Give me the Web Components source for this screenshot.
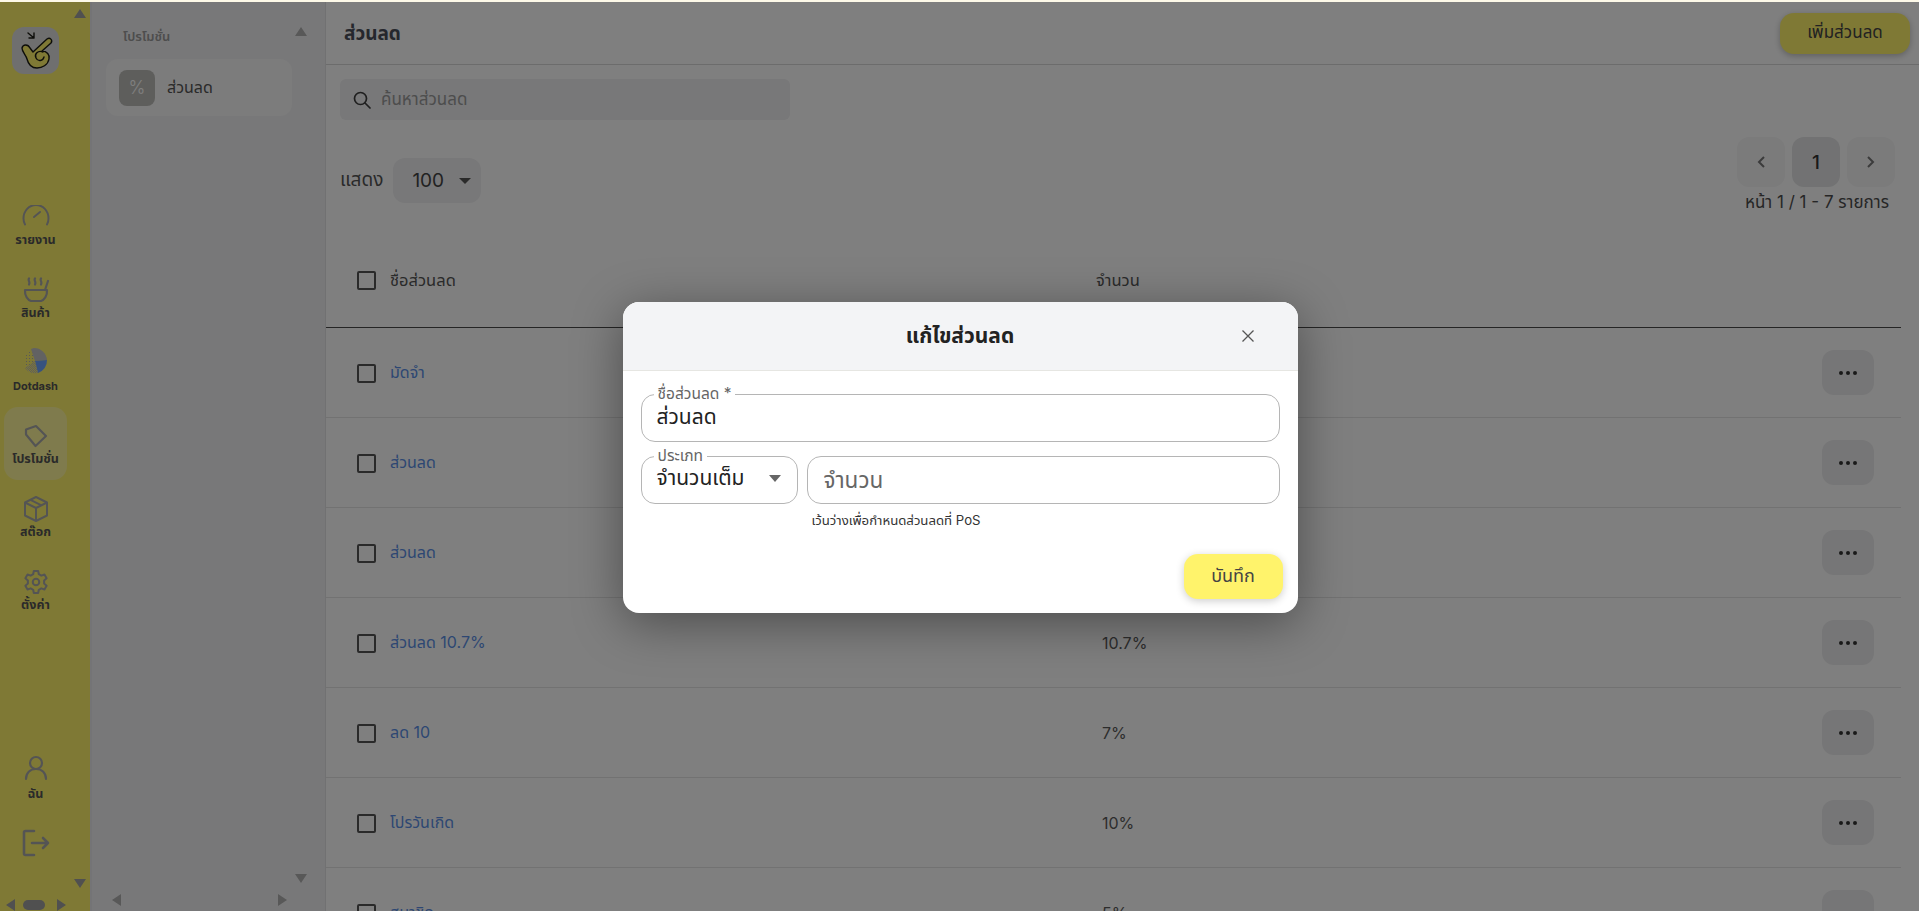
<!DOCTYPE html>
<html lang="th">
<head>
<meta charset="utf-8">
<title>ส่วนลด</title>
<style>
  html, body { margin: 0; height: 100%; overflow: hidden; background: #fff; }
  body { font-family: Inter, "Noto Sans Thai", "Noto Sans", "Open Sans", sans-serif; color: #3a3f4a; }
</style>
</head>
<body>
<app-shell>
  <app-rail slot="rail"></app-rail>
  <promo-panel slot="panel"></promo-panel>
  <discount-page slot="main"></discount-page>
  <edit-dialog slot="dialog"></edit-dialog>
</app-shell>

<script>
const ICONS = {
  gauge: `<svg width="28" height="24" viewBox="0 2 28 24" fill="none" stroke="#a9a9a9" stroke-width="2" stroke-linecap="round"><path d="M3 21.500C1.800 19.500 1.500 17.500 1.500 15.500 1.500 8 7 2 14 2s12.500 6 12.500 13.500c0 2-.3 4-1.500 6"/><path d="M12 14l6-5"/></svg>`,
  bowl: `<svg width="28" height="26" viewBox="0 0 28 26" fill="none" stroke="#a9a9a9" stroke-width="2.200" stroke-linecap="round" stroke-linejoin="round"><path d="M7 1.500c-1.500 2 1.500 3 0 6M13 1.500c-1.500 2 1.500 3 0 6M19 1.500c-1.500 2 1.500 3 0 6M26 4l-3 9"/><path d="M3 13h22c.5 6-3 10-6 11H9c-3-1-6.500-5-6-11z"/></svg>`,
  dotdash: `<svg width="26" height="30" viewBox="0 2 26 30"><defs><pattern id="d" width="2" height="2" patternUnits="userSpaceOnUse"><rect width="1" height="1" fill="#bdbdbd"/><rect x="1" y="1" width="1" height="1" fill="#bdbdbd"/></pattern><pattern id="s" width="3" height="3" patternUnits="userSpaceOnUse"><rect width="1" height="1" fill="#b0b0b0"/></pattern></defs><path d="M11 2a13 13 0 0 1 13 12l-12 1L8 3z" fill="#c4c4c4"/><path d="M24 14a13 13 0 0 1-9 13L12 15z" fill="#6fa4ff"/><path d="M15 27A13 13 0 0 1 2 22l10-7z" fill="url(#d)"/><path d="M2 22l10-7L8 3C5 5 3 8 2 10z" fill="url(#s)"/></svg>`,
  tag: `<svg width="26" height="26" viewBox="0 0 26 26" fill="none" stroke="#a9a9a9" stroke-width="2.200" stroke-linejoin="round"><path d="M3 6.500 13 3l10 10-10.500 10L3 11.500z"/></svg>`,
  box: `<svg width="26" height="28" viewBox="0 0 26 28" fill="none" stroke="#a9a9a9" stroke-width="2" stroke-linejoin="round"><path d="M13 2l11 5.500v13L13 26 2 20.500v-13z"/><path d="M2 7.500 13 13l11-5.500M13 13v13M7.500 4.800l11 5.500"/></svg>`,
  gear: `<svg width="26" height="26" viewBox="0 0 24 24" fill="none" stroke="#a9a9a9" stroke-width="1.900" stroke-linejoin="round"><circle cx="12" cy="12" r="3"/><path d="M10 1.800h4l.6 3 2.300 1.300 2.900-1 2 3.500-2.300 2v2.800l2.300 2-2 3.500-2.900-1-2.300 1.300-.6 3h-4l-.6-3-2.300-1.300-2.900 1-2-3.500 2.300-2v-2.800l-2.300-2 2-3.500 2.900 1 2.300-1.300z"/></svg>`,
  user: `<svg width="24" height="26" viewBox="0 0 24 26" fill="none" stroke="#a9a9a9" stroke-width="2.200" stroke-linecap="round"><circle cx="12" cy="8" r="6"/><path d="M2 24c0-6 4-10 10-10s10 4 10 10"/></svg>`,
  logout: `<svg width="28" height="28" viewBox="0 0 28 28" fill="none" stroke="#a9a9a9" stroke-width="2.600" stroke-linecap="round" stroke-linejoin="round"><path d="M12 2H3.500A1.500 1.500 0 0 0 2 3.500v21A1.500 1.500 0 0 0 3.500 26H12"/><path d="M10 14h16M21 9l5 5-5 5"/></svg>`,
  search: `<svg width="18" height="18" viewBox="0 0 18 18" fill="none" stroke="#3f3f3f" stroke-width="1.700" stroke-linecap="round"><circle cx="7.500" cy="7.500" r="6"/><path d="M12 12l5 5"/></svg>`,
  hand: `<svg width="47" height="47" viewBox="0 0 47 47" stroke="#1c1c14" stroke-width="1.400" stroke-linejoin="round" stroke-linecap="round"><path d="M16 6l6 5M22 6v5h-5" fill="none"/><path d="M10 21c1-4 6-4 8 0l3 4L35 12c3-2 6 1 4 4l-9 8c5 0 8 4 7 8-1 6-7 9-12 9-6 0-9-5-10-9-1-4-5-7-5-11z" fill="#fff36b"/><path d="M31 25c-5-2-9 2-7 6 2 4 7 3 8-1" fill="none"/></svg>`
};

class BaseEl extends HTMLElement {
  constructor() {
    super();
    this.attachShadow({ mode: "open" });
  }
}

class AppShell extends BaseEl {
  connectedCallback() {
    this.shadowRoot.innerHTML = `
      <style>
        :host { display: block; height: 100vh; overflow: hidden; position: relative; }
        .strip { height: 2px; background: #fdf9e8; }
        .layout { display: flex; height: calc(100vh - 2px); }
        ::slotted([slot="main"]) { flex: 1; min-width: 0; }
      </style>
      <div class="strip"></div>
      <div class="layout">
        <slot name="rail"></slot>
        <slot name="panel"></slot>
        <slot name="main"></slot>
      </div>
      <slot name="dialog"></slot>
    `;
  }
}

class ScrollArrow extends BaseEl {
  connectedCallback() {
    const dir = this.getAttribute("dir-to");
    const pts = { up: "6,1 12,10 0,10", down: "0,1 12,1 6,10", left: "10,0 10,12 1,6", right: "1,0 1,12 10,6" }[dir];
    this.shadowRoot.innerHTML = `
      <style>:host { position: absolute; display: block; width: 12px; height: 12px; line-height: 0; }</style>
      <svg width="12" height="12" viewBox="0 0 12 12"><polygon points="${pts}" fill="${this.getAttribute("color") || "#a0a0a0"}"/></svg>
    `;
  }
}

class RailItem extends BaseEl {
  connectedCallback() {
    const active = this.hasAttribute("active");
    this.shadowRoot.innerHTML = `
      <style>
        :host { display: block; }
        .item {
          width: 63px; height: 73px; margin: 0 auto; box-sizing: border-box;
          display: flex; flex-direction: column; align-items: center; justify-content: flex-start;
          padding-top: 14px; border-radius: 14px;
          background: ${active ? "rgba(255,255,255,.32)" : "transparent"};
        }
        .icon { height: 30px; display: flex; align-items: center; justify-content: center; }
        .label {
          font-size: var(--label-size, 12.500px); margin-top: var(--label-gap, 0); font-weight: 700;
          line-height: 16px; color: #555; white-space: nowrap;
        }
      </style>
      <div class="item">
        <div class="icon">${ICONS[this.getAttribute("icon")]}</div>
        <div class="label"><slot></slot></div>
      </div>
    `;
  }
}

class AppRail extends BaseEl {
  connectedCallback() {
    this.shadowRoot.innerHTML = `
      <style>
        :host {
          display: flex; flex-direction: column; width: 92px; flex: none; position: relative;
          background: #fff36b; box-sizing: border-box; padding: 25px 23px 54px 4px;
          border-right: 2px solid #e8e8ec;
        }
        .logo {
          width: 47px; height: 47px; border-radius: 12px; background: #dedede; margin: 0 auto;
          line-height: 0;
        }
        nav { margin-top: 114px; display: flex; flex-direction: column; }
        .bottom { margin-top: auto; display: flex; flex-direction: column; align-items: center; }
        .logout { margin-top: 17px; line-height: 0; }
      </style>
      <div class="logo">${ICONS.hand}</div>
      <nav>
        <rail-item icon="gauge">รายงาน</rail-item>
        <rail-item icon="bowl">สินค้า</rail-item>
        <rail-item icon="dotdash" style="--label-size:11px">Dotdash</rail-item>
        <rail-item icon="tag" active>โปรโมชั่น</rail-item>
        <rail-item icon="box">สต๊อก</rail-item>
        <rail-item icon="gear">ตั้งค่า</rail-item>
      </nav>
      <div class="bottom">
        <rail-item icon="user" style="--label-gap:3px">ฉัน</rail-item>
        <div class="logout">${ICONS.logout}</div>
      </div>
      <scroll-arrow dir-to="up" style="left:74px;top:6px"></scroll-arrow>
      <scroll-arrow dir-to="down" style="left:74px;top:876px"></scroll-arrow>
      <scroll-arrow dir-to="left" style="left:5px;top:897px"></scroll-arrow>
      <scroll-arrow dir-to="right" style="left:56px;top:897px"></scroll-arrow>
      <div style="position:absolute;left:23px;top:898px;width:22px;height:10px;border-radius:5px;background:#a0a0a0"></div>
    `;
  }
}

class PromoPanel extends BaseEl {
  connectedCallback() {
    this.shadowRoot.innerHTML = `
      <style>
        :host {
          display: block; width: 234px; flex: none; position: relative; box-sizing: border-box;
          background: #f1f1f3; border-right: 1px solid #e2e2e4; padding: 26px 33px 0 14px;
        }
        h3 { margin: 0 0 0 17px; font-size: 13px; line-height: 16px; font-weight: 600; color: #9a9a9a; }
        .item {
          margin-top: 15px; height: 57px; border-radius: 12px; background: #f8f8f8;
          display: flex; align-items: center; gap: 12px; padding-left: 13px;
          font-size: 16px; color: #555;
        }
        .tile {
          width: 36px; height: 36px; border-radius: 8px; background: #bcbcb8;
          display: flex; align-items: center; justify-content: center; color: #fff; font-size: 18px; font-weight: 300;
        }
      </style>
      <h3>โปรโมชั่น</h3>
      <div class="item"><span class="tile">%</span><span>ส่วนลด</span></div>
      <scroll-arrow dir-to="up" color="#b0b0b0" style="left:203px;top:24px"></scroll-arrow>
      <scroll-arrow dir-to="down" color="#b0b0b0" style="left:203px;top:871px"></scroll-arrow>
      <scroll-arrow dir-to="left" color="#b0b0b0" style="left:19px;top:892px"></scroll-arrow>
      <scroll-arrow dir-to="right" color="#b0b0b0" style="left:185px;top:892px"></scroll-arrow>
    `;
  }
}

class SquareBtn extends BaseEl {
  connectedCallback() {
    const a = this.hasAttribute("active");
    this.shadowRoot.innerHTML = `
      <style>
        :host {
          display: flex; align-items: center; justify-content: center; box-sizing: border-box;
          width: 48px; height: 50px; border-radius: 12px; font-size: 19px; font-weight: 500;
          background: ${a ? "#e4e5e6" : "#f6f6f7"}; color: #333;
        }
      </style><slot></slot>
    `;
  }
}

class CheckBox extends BaseEl {
  connectedCallback() {
    this.shadowRoot.innerHTML = `
      <style>
        :host { display: block; flex: none; width: 19px; height: 19px; box-sizing: border-box; border: 2px solid #555; border-radius: 2px; background: #fff; }
      </style>
    `;
  }
}

class DiscountRow extends BaseEl {
  connectedCallback() {
    const name = this.getAttribute("name");
    const value = this.getAttribute("value") || "";
    this.shadowRoot.innerHTML = `
      <style>
        :host {
          display: grid; grid-template-columns: 745px 1fr auto; align-items: center; box-sizing: border-box;
          height: 90px; border-bottom: 1px solid #e5e5e5; padding: 0 27px 0 31px; font-size: 16px; color: #5a5a5a;
        }
        .name { display: flex; align-items: center; gap: 14px; }
        check-box { margin-top: 2px; }
        a { color: #5b8fe6; text-decoration: none; }
        .more {
          width: 52px; height: 45px; border-radius: 12px; background: #ededee;
          display: flex; align-items: center; justify-content: center; gap: 3px;
        }
        .more i { width: 4px; height: 4px; border-radius: 50%; background: #333; }
      </style>
      <div class="name"><check-box></check-box><a>${name}</a></div>
      <div>${value}</div>
      <div class="more"><i></i><i></i><i></i></div>
    `;
  }
}

class DiscountPage extends BaseEl {
  connectedCallback() {
    this.shadowRoot.innerHTML = `
      <style>
        :host { display: block; overflow: hidden; background: #fff; }
        header {
          height: 63px; box-sizing: border-box; border-bottom: 1px solid #d9d9d9;
          display: flex; align-items: center; justify-content: space-between; padding: 0 9px 0 18px;
        }
        h1 { margin: 3px 0 0; font-size: 19px; font-weight: 700; color: #4b4f5a; }
        .add {
          width: 130px; height: 41px; border-radius: 14px; background: #fff36b; color: #444;
          display: flex; align-items: center; justify-content: center; font-size: 17px;
          box-shadow: 0 2px 6px rgba(0,0,0,.25);
        }
        .search {
          margin: 14px 0 0 14px; width: 450px; height: 41px; border-radius: 6px; background: #f0f0f2;
          display: flex; align-items: center; gap: 10px; padding-left: 13px; box-sizing: border-box;
          font-size: 17px; color: #9a9a9a;
        }
        .toolbar {
          margin-top: 17px; height: 96px; display: flex; justify-content: space-between; padding: 0 24px 0 14px;
        }
        .show { display: flex; align-items: center; gap: 10px; height: 45px; margin-top: 21px; font-size: 19px; color: #555; }
        .select {
          width: 88px; height: 45px; border-radius: 12px; background: #f0f0f2; box-sizing: border-box;
          display: flex; align-items: center; justify-content: space-between; padding: 0 10px 0 19px;
          font-size: 19px; color: #444;
        }
        .caret { width: 0; height: 0; border: 6px solid transparent; border-top: 6px solid #555; border-bottom: 0; }
        .pager { display: flex; flex-direction: column; align-items: flex-end; }
        .btns { display: flex; gap: 7px; }
        .info { margin: 5px 6px 0 0; font-size: 17px; line-height: 20px; color: #4d4d4d; white-space: nowrap; }
        svg { display: block; }
        .table { width: 1575px; }
        .head {
          height: 95px; box-sizing: border-box; border-bottom: 1px solid #4a4a4a; padding: 0 0 0 31px;
          display: grid; grid-template-columns: 739px 1fr; align-items: center; font-size: 16.500px; color: #555;
        }
        .name { display: flex; align-items: center; gap: 14px; }
      </style>
      <header>
        <h1>ส่วนลด</h1>
        <div class="add">เพิ่มส่วนลด</div>
      </header>
      <div class="search">${ICONS.search}<span>ค้นหาส่วนลด</span></div>
      <div class="toolbar">
        <div class="show"><span>แสดง</span><div class="select"><span>100</span><span class="caret"></span></div></div>
        <div class="pager">
          <div class="btns">
            <square-btn><svg width="10" height="14" viewBox="0 0 10 14" fill="none" stroke="#777" stroke-width="2"><path d="M8 2L3 7l5 5"/></svg></square-btn>
            <square-btn active>1</square-btn>
            <square-btn><svg width="10" height="14" viewBox="0 0 10 14" fill="none" stroke="#777" stroke-width="2"><path d="M2 2l5 5-5 5"/></svg></square-btn>
          </div>
          <div class="info">หน้า 1 / 1 - 7 รายการ</div>
        </div>
      </div>
      <div class="table">
        <div class="head">
          <div class="name"><check-box></check-box><span>ชื่อส่วนลด</span></div>
          <div>จำนวน</div>
        </div>
        <discount-row name="มัดจำ"></discount-row>
        <discount-row name="ส่วนลด"></discount-row>
        <discount-row name="ส่วนลด"></discount-row>
        <discount-row name="ส่วนลด 10.7%" value="10.7%"></discount-row>
        <discount-row name="ลด 10" value="7%"></discount-row>
        <discount-row name="โปรวันเกิด" value="10%"></discount-row>
        <discount-row name="สมาชิก" value="5%"></discount-row>
      </div>
    `;
  }
}

class OutlineField extends BaseEl {
  connectedCallback() {
    const label = this.getAttribute("label");
    this.shadowRoot.innerHTML = `
      <style>
        :host {
          display: flex; align-items: center; justify-content: space-between; position: relative; box-sizing: border-box;
          height: 48px; border: 1px solid #b5b5b5; border-radius: 14px; padding: 0 16px var(--field-bottom, 2px) 15px;
          font-size: 21px; color: #222; background: #fff;
        }
        label {
          position: absolute; left: 12px; top: -9px; padding: 0 4px; background: #fff;
          font-size: 15.500px; line-height: 16px; color: #666;
        }
      </style>
      ${label ? `<label>${label}</label>` : ""}
      <slot></slot>
    `;
  }
}

class EditDialog extends BaseEl {
  connectedCallback() {
    this.shadowRoot.innerHTML = `
      <style>
        :host {
          position: absolute; left: 0; right: 0; top: 2px; bottom: 0; background: rgba(0,0,0,.5);
          display: flex; align-items: flex-start; justify-content: center; padding: 300px 0 0 1px; box-sizing: border-box;
        }
        .modal {
          width: 675px; height: 311px; border-radius: 16px; background: #fff; overflow: hidden;
          box-shadow: 0 10px 50px rgba(0,0,0,.4); display: flex; flex-direction: column;
        }
        .head {
          height: 69px; flex: none; box-sizing: border-box; background: #f3f4f6; border-bottom: 1px solid #e6e6e2;
          display: grid; grid-template-columns: 1fr auto 1fr; align-items: center;
        }
        h2 { margin: 0; font-size: 21px; font-weight: 700; color: #222; }
        .close { justify-self: end; margin-right: 43px; line-height: 0; }
        .body { flex: 1; padding: 23px 18px 14px 18px; display: flex; flex-direction: column; }
        .row { display: grid; grid-template-columns: 157px 1fr; gap: 9px; margin-top: 14px; --field-bottom: 4px; }
        .hint { margin: 7px 0 0 171px; font-size: 13.200px; line-height: 18px; color: #333; }
        .foot { margin-top: auto; display: flex; justify-content: flex-end; margin-right: -3px; }
        .save {
          width: 99px; height: 45px; border-radius: 14px; background: #fff36b; color: #444;
          display: flex; align-items: center; justify-content: center; font-size: 18px;
          box-shadow: 0 2px 8px rgba(0,0,0,.2);
        }
        .caret { width: 0; height: 0; border: 6px solid transparent; border-top: 7px solid #666; border-bottom: 0; }
        .ph { color: #666; padding: 6px 0 0 1px; font-size: 22.500px; }
      </style>
      <div class="modal">
        <div class="head">
          <span></span>
          <h2>แก้ไขส่วนลด</h2>
          <div class="close"><svg width="14" height="14" viewBox="0 0 14 14" fill="none" stroke="#555" stroke-width="1.300"><path d="M1.500 1.500l11 11M12.500 1.500l-11 11"/></svg></div>
        </div>
        <div class="body">
          <outline-field label="ชื่อส่วนลด *">ส่วนลด</outline-field>
          <div class="row">
            <outline-field label="ประเภท"><span>จำนวนเต็ม</span><span class="caret"></span></outline-field>
            <outline-field><span class="ph">จำนวน</span></outline-field>
          </div>
          <div class="hint">เว้นว่างเพื่อกำหนดส่วนลดที่ PoS</div>
          <div class="foot"><div class="save">บันทึก</div></div>
        </div>
      </div>
    `;
  }
}

customElements.define("app-shell", AppShell);
customElements.define("scroll-arrow", ScrollArrow);
customElements.define("rail-item", RailItem);
customElements.define("app-rail", AppRail);
customElements.define("promo-panel", PromoPanel);
customElements.define("square-btn", SquareBtn);
customElements.define("check-box", CheckBox);
customElements.define("discount-row", DiscountRow);
customElements.define("discount-page", DiscountPage);
customElements.define("outline-field", OutlineField);
customElements.define("edit-dialog", EditDialog);
</script>
</body>
</html>
